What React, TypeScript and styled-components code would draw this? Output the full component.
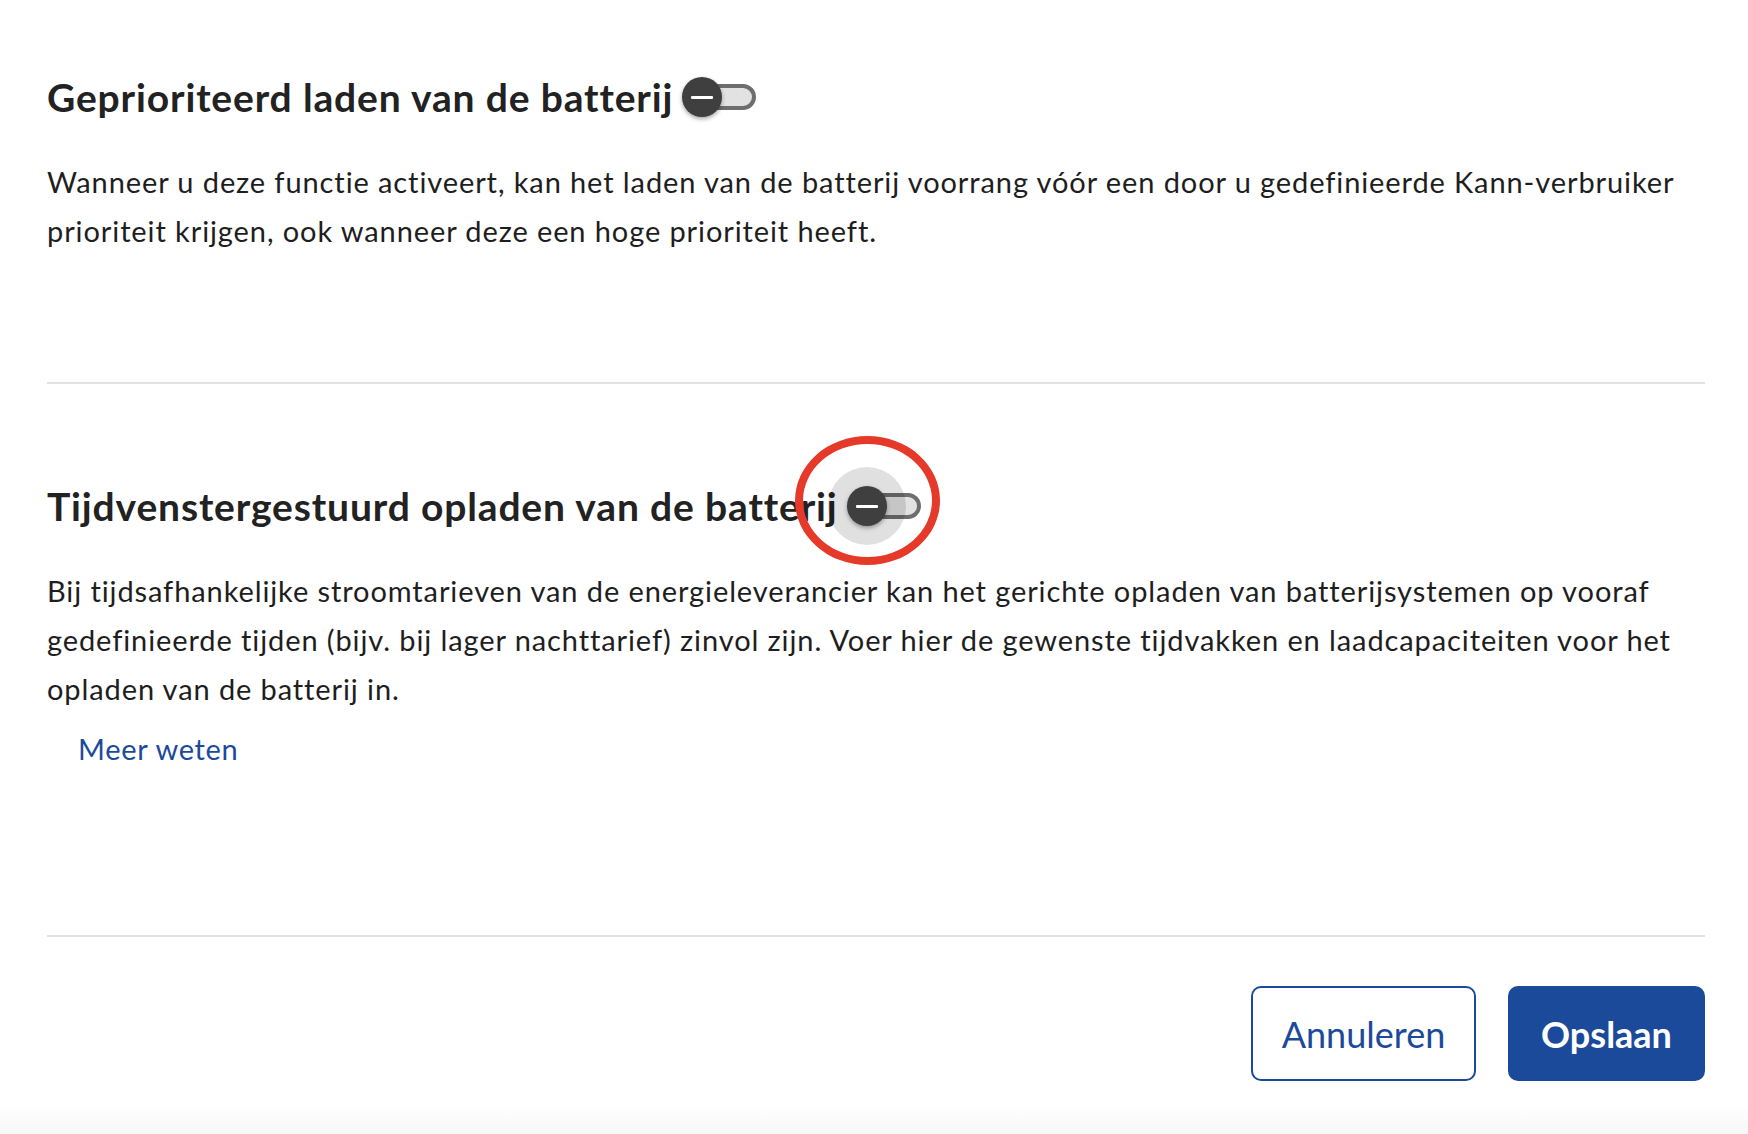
import React from "react";
import styled, { createGlobalStyle } from "styled-components";

const Global = createGlobalStyle`
  html, body { margin: 0; padding: 0; background: #ffffff; }
  body { font-family: Lato, "Open Sans", sans-serif; color: #1e1e1e; }
`;

const Page = styled.div`
  width: 1748px;
  height: 1134px;
  display: flex;
  flex-direction: column;
  box-sizing: border-box;
  overflow: hidden;
`;

const Content = styled.div`
  padding: 0 43px 0 47px;
  display: flex;
  flex-direction: column;
`;

const Section = styled.section<{ $top: number; $bottom: number }>`
  padding-top: ${(p) => p.$top}px;
  padding-bottom: ${(p) => p.$bottom}px;
  border-bottom: 2px solid #e2e2e2;
  display: flex;
  flex-direction: column;
`;

const TitleRow = styled.div`
  display: flex;
  align-items: center;
  gap: 9px;
  height: 48px;
`;

const Title = styled.h2`
  margin: 0;
  font-family: Lato, sans-serif;
  font-weight: 700;
  font-size: 39px;
  line-height: 48px;
  color: #222222;
  letter-spacing: 0.85px;
`;

const Body = styled.p`
  margin: 36px 0 0;
  font-size: 29px;
  line-height: 49px;
  letter-spacing: 0.9px;
  color: #1e1e1e;
`;

const Link = styled.a`
  margin: 11px 0 0 31px;
  font-size: 29px;
  line-height: 49px;
  letter-spacing: 0.7px;
  color: #1c4a9b;
  text-decoration: none;
  align-self: flex-start;
`;

const SwitchWrap = styled.span`
  position: relative;
  display: inline-flex;
  align-items: center;
  width: 74px;
  height: 40px;
  flex: none;
`;

const Track = styled.span`
  position: absolute;
  left: 6px;
  right: 0;
  top: 7px;
  height: 26px;
  box-sizing: border-box;
  border-radius: 13px;
  border: 4px solid #6e6e6e;
  background: #e2e2e2;
`;

const Halo = styled.span`
  position: absolute;
  left: -19px;
  top: -19px;
  width: 78px;
  height: 78px;
  border-radius: 50%;
  background: rgba(0, 0, 0, 0.12);
`;

const Knob = styled.span`
  position: absolute;
  left: 0;
  top: 0;
  width: 40px;
  height: 40px;
  border-radius: 50%;
  background: #3f3f3f;
  box-shadow: 0 2px 4px rgba(0, 0, 0, 0.35);
  display: flex;
  align-items: center;
  justify-content: center;
  &::after {
    content: "";
    width: 22px;
    height: 3px;
    border-radius: 1px;
    background: #ffffff;
  }
`;

const Marker = styled.span`
  position: absolute;
  left: -52px;
  top: -50px;
  width: 145px;
  height: 129px;
  box-sizing: border-box;
  border-radius: 50%;
  border: 8px solid #e5392a;
  pointer-events: none;
`;

const Actions = styled.div`
  display: flex;
  justify-content: flex-end;
  gap: 32px;
  padding-top: 49px;
`;

const Button = styled.button<{ $primary?: boolean }>`
  height: 95px;
  box-sizing: border-box;
  border-radius: 10px;
  font-family: Lato, sans-serif;
  font-size: 36px;
  cursor: pointer;
  border: 2px solid #1c4a9b;
  background: ${(p) => (p.$primary ? "#1c4a9b" : "#ffffff")};
  color: ${(p) => (p.$primary ? "#ffffff" : "#1c4a9b")};
  font-weight: ${(p) => (p.$primary ? 700 : 400)};
  width: ${(p) => (p.$primary ? 197 : 225)}px;
`;

const Footer = styled.div`
  margin-top: auto;
  height: 30px;
  background: linear-gradient(#ffffff, #f7f7f7);
`;

function Switch({ highlighted }: { highlighted?: boolean }) {
  return (
    <SwitchWrap>
      <Track />
      {highlighted && <Halo />}
      <Knob />
      {highlighted && <Marker />}
    </SwitchWrap>
  );
}

export default function App() {
  return (
    <Page>
      <Global />
      <Content>
        <Section $top={73} $bottom={127}>
          <TitleRow>
            <Title>Geprioriteerd laden van de batterij</Title>
            <Switch />
          </TitleRow>
          <Body>
            Wanneer u deze functie activeert, kan het laden van de batterij voorrang vóór een door u gedefinieerde Kann-verbruiker prioriteit krijgen, ook wanneer deze een hoge prioriteit heeft.
          </Body>
        </Section>
        <Section $top={98} $bottom={162}>
          <TitleRow>
            <Title>Tijdvenstergestuurd opladen van de batterij</Title>
            <Switch highlighted />
          </TitleRow>
          <Body>
            Bij tijdsafhankelijke stroomtarieven van de energieleverancier kan het gerichte opladen van batterijsystemen op vooraf gedefinieerde tijden (bijv. bij lager nachttarief) zinvol zijn. Voer hier de gewenste tijdvakken en laadcapaciteiten voor het opladen van de batterij in.
          </Body>
          <Link href="#">Meer weten</Link>
        </Section>
        <Actions>
          <Button>Annuleren</Button>
          <Button $primary>Opslaan</Button>
        </Actions>
      </Content>
      <Footer />
    </Page>
  );
}
